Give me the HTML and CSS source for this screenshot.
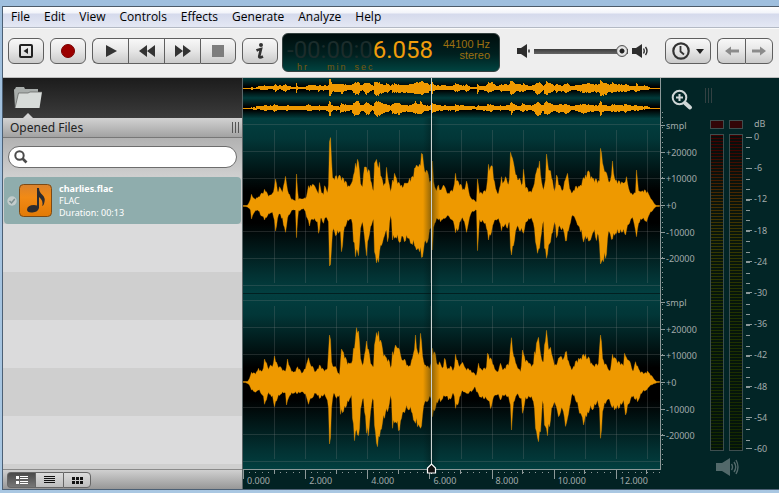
FILE: index.html
```html
<!DOCTYPE html>
<html lang="en">
<head>
    <meta charset="UTF-8">
    <meta name="viewport" content="width=device-width, initial-scale=1.0">
    <title>charlies.flac</title>
    <link rel="stylesheet" href="styles.css">
</head>
<body>
    <div class="window">
        <nav class="menu">
            <button>File</button>
            <button>Edit</button>
            <button>View</button>
            <button>Controls</button>
            <button>Effects</button>
            <button>Generate</button>
            <button>Analyze</button>
            <button>Help</button>
        </nav>

        <header class="toolbar">
            <div class="group">
                <button class="tool" aria-label="Toggle sidebar">
                    <svg width="14" height="14" viewBox="0 0 14 14"><rect x="1" y="1" width="12" height="12" rx="1" fill="none" stroke="#222" stroke-width="2"/><path d="M9 4v6L4.500 7z" fill="#222"/></svg>
                </button>
            </div>
            <div class="group">
                <button class="tool" aria-label="Record">
                    <svg width="14" height="14" viewBox="0 0 14 14"><circle cx="7" cy="7" r="6.500" fill="#9c0000" stroke="#7a0000"/></svg>
                </button>
            </div>
            <div class="group">
                <button class="tool" aria-label="Play">
                    <svg width="12" height="12" viewBox="0 0 12 12"><path d="M1 0l11 6-11 6z" fill="#333"/></svg>
                </button>
                <button class="tool" aria-label="Rewind">
                    <svg width="16" height="12" viewBox="0 0 16 12"><path d="M8 0v12L0 6zM16 0v12L8 6z" fill="#333"/></svg>
                </button>
                <button class="tool" aria-label="Forward">
                    <svg width="16" height="12" viewBox="0 0 16 12"><path d="M0 0v12l8-6zM8 0v12l8-6z" fill="#333"/></svg>
                </button>
                <button class="tool" aria-label="Stop">
                    <svg width="12" height="12" viewBox="0 0 12 12"><path d="M0 0h12v12H0z" fill="#7d7d7d"/></svg>
                </button>
            </div>
            <div class="group">
                <button class="tool" aria-label="Info">
                    <svg width="10" height="17" viewBox="0 0 10 17"><circle cx="6" cy="2" r="2" fill="#333"/><path d="M1.500 7.500q2-1 4.500-1.500L4.200 13.500Q4 15.500 8 13.500" fill="none" stroke="#333" stroke-width="2.600"/></svg>
                </button>
            </div>

            <div class="lcd">
                <div class="time">
                    <div class="digits"><span class="dim">-00:00:0</span><span>6.058</span></div>
                    <div class="units"><span>hr</span><span>min</span><span>sec</span></div>
                </div>
                <div class="format">44100 Hz<br>stereo</div>
            </div>

            <div class="volume">
                <svg width="13" height="14" viewBox="0 0 13 14"><path d="M0 4h4l6-4v14l-6-4H0z" fill="#2d2d2d"/><path d="M12 5.500v3" stroke="#2d2d2d" stroke-width="1.500"/></svg>
                <input type="range" min="0" max="100" value="100" aria-label="Volume">
                <svg width="17" height="14" viewBox="0 0 17 14"><path d="M0 4h4l6-4v14l-6-4H0z" fill="#2d2d2d"/><path d="M11.500 4.500q1.500 2.500 0 5M13.500 3q3 4 0 8" fill="none" stroke="#2d2d2d" stroke-width="1.400"/></svg>
            </div>

            <div class="group right">
                <button class="tool history" aria-label="History">
                    <svg width="18" height="18" viewBox="0 0 18 18"><circle cx="9" cy="9" r="7.700" fill="none" stroke="#333" stroke-width="2.200"/><path d="M8.500 4v5.500l3.500 3" fill="none" stroke="#333" stroke-width="1.800"/></svg>
                    <svg width="8" height="5" viewBox="0 0 8 5"><path d="M0 0h8L4 5z" fill="#222"/></svg>
                </button>
            </div>
            <div class="group">
                <button class="tool arrow" aria-label="Undo">
                    <svg width="14" height="10" viewBox="0 0 14 10"><path d="M0 5l6-4.500v3h8v3H6v3z" fill="#8b8b8b"/></svg>
                </button>
                <button class="tool arrow" aria-label="Redo">
                    <svg width="14" height="10" viewBox="0 0 14 10"><path d="M14 5L8 .5v3H0v3h8v3z" fill="#8b8b8b"/></svg>
                </button>
            </div>
        </header>

        <main>
            <aside class="sidebar">
                <div class="tabs">
                    <button class="tab" aria-label="Opened files">
                        <svg width="30" height="24" viewBox="0 0 30 24"><path d="M2 22L1 4q0-1 1-1l1-2h8l1 2h13v5" fill="#a9aeac"/><path d="M2 22L5.500 7H15l2-1h12l-2.500 16z" fill="#d7dbd9"/><path d="M2 22L5.500 7H15l2-1h12" fill="none" stroke="#5b5e5d" stroke-width=".7"/></svg>
                    </button>
                </div>
                <div class="panel-title">
                    <h2>Opened Files</h2>
                    <span class="grip"></span>
                </div>
                <div class="search">
                    <label>
                        <svg width="14" height="14" viewBox="0 0 14 14"><circle cx="5.500" cy="5.500" r="4.200" fill="none" stroke="#4b4b4b" stroke-width="2"/><path d="M8.500 8.500l4 4" stroke="#4b4b4b" stroke-width="2.600"/></svg>
                        <input type="text" aria-label="Search files">
                    </label>
                </div>
                <ul class="files">
                    <li class="file">
                        <svg class="check" width="10" height="10" viewBox="0 0 10 10"><circle cx="5" cy="5" r="4.700" fill="#c3cccb"/><path d="M2.500 5l2 2 3.300-4" fill="none" stroke="#7c8f8f" stroke-width="1.500"/></svg>
                        <svg class="cover" width="33" height="33" viewBox="0 0 33 33">
                            <defs><linearGradient id="cover" x2="0" y2="1"><stop offset="0" stop-color="#d9822d"/><stop offset=".4" stop-color="#f28a14"/><stop offset="1" stop-color="#e27a06"/></linearGradient></defs>
                            <rect x=".5" y=".5" width="32" height="32" rx="4" fill="url(#cover)" stroke="#7b4a15"/>
                            <path d="M18 4h2q0 4 3.500 7t1.500 9q-.5 1.500-2 2 2-5-3-9v11q-1 4-6.500 4.500Q8 29 8 25.500 8.500 21 15 21l3 .5z" fill="#2c2c30"/>
                        </svg>
                        <div class="file-text">
                            <strong>charlies.flac</strong>
                            <span>FLAC</span>
                            <span>Duration: 00:13</span>
                        </div>
                    </li>
                </ul>
                <div class="views">
                    <button class="view active" aria-label="Details">
                        <svg width="12" height="8" viewBox="0 0 12 8"><path d="M0 0h3v3H0zM0 5h3v3H0zM4 0h8v1H4zM4 2h8v1H4zM4 5h8v1H4zM4 7h8v1H4z" fill="#fff"/></svg>
                    </button>
                    <button class="view" aria-label="List">
                        <svg width="11" height="8" viewBox="0 0 11 8"><path d="M0 0h11v1H0zM0 2h11v1H0zM0 4h11v1H0zM0 6h11v1H0z" fill="#111"/></svg>
                    </button>
                    <button class="view" aria-label="Grid">
                        <svg width="11" height="7" viewBox="0 0 11 7"><path d="M0 0h3v3H0zM4 0h3v3H4zM8 0h3v3H8zM0 4h3v3H0zM4 4h3v3H4zM8 4h3v3H8z" fill="#111"/></svg>
                    </button>
                </div>
            </aside>

            <section class="editor">
                <div class="tracks">
                    <div class="overview">
                        <svg class="mini" data-channel="left" viewBox="0 0 417 20" preserveAspectRatio="none"></svg>
                        <svg class="mini" data-channel="right" viewBox="0 0 417 20" preserveAspectRatio="none"></svg>
                    </div>
                    <svg class="wave" data-channel="left" viewBox="0 0 417 175" preserveAspectRatio="none"></svg>
                    <svg class="wave" data-channel="right" viewBox="0 0 417 175" preserveAspectRatio="none"></svg>
                    <div class="playhead">
                        <svg width="11" height="11" viewBox="0 0 11 11"><path d="M1.500 10V5l4-4 4 4v5z" fill="#111" stroke="#fff" stroke-width="1.200"/></svg>
                    </div>
                </div>
                <div class="ruler">
                    <span>0.000</span><span>2.000</span><span>4.000</span><span>6.000</span><span>8.000</span><span>10.000</span><span>12.000</span>
                </div>
            </section>

            <aside class="levels">
                <div class="scales">
                    <button class="zoom" aria-label="Zoom in">
                        <svg width="22" height="22" viewBox="0 0 22 22"><circle cx="8.500" cy="8.500" r="6.800" fill="none" stroke="#cfd6d6" stroke-width="2"/><path d="M8.500 5v7M5 8.500h7" stroke="#cfd6d6" stroke-width="2"/><path d="M14 14l5 4.500" stroke="#cfd6d6" stroke-width="4" stroke-linecap="round"/></svg>
                    </button>
                    <div class="scale">
                        <span>smpl</span><span>+20000</span><span>+10000</span><span>+0</span><span>-10000</span><span>-20000</span>
                    </div>
                    <div class="scale">
                        <span>smpl</span><span>+20000</span><span>+10000</span><span>+0</span><span>-10000</span><span>-20000</span>
                    </div>
                </div>
                <div class="meters">
                    <span class="grip"></span>
                    <div class="meter-head">
                        <span class="clip"></span>
                        <span class="clip"></span>
                        <span class="unit">dB</span>
                    </div>
                    <div class="meter-body">
                        <span class="bar"></span>
                        <span class="bar"></span>
                        <div class="db">
                            <span>0</span><span>-6</span><span>-12</span><span>-18</span><span>-24</span><span>-30</span><span>-36</span><span>-42</span><span>-48</span><span>-54</span><span>-60</span>
                        </div>
                    </div>
                    <svg class="speaker" width="23" height="18" viewBox="0 0 23 18"><path d="M0 5h6l8-5v18l-8-5H0z" fill="#52696a"/><path d="M15.500 6q2 3 0 6M18 4q3.500 5 0 10M20 2q4 7 0 14" fill="none" stroke="#52696a" stroke-width="1.400"/></svg>
                </div>
            </aside>
        </main>
    </div>
    <script src="script.js"></script>
</body>
</html>
```
FILE: styles.css
```css
* {
    box-sizing: border-box;
}

body {
    margin: 0;
    min-height: 100vh;
    padding: 6px 0 4px 2px;
    display: flex;
    background: linear-gradient(#9fbfde, #a9c7e2);
    font-family: "Noto Sans", "Open Sans", sans-serif;
    font-size: 9px;
    color: #222;
}

button {
    margin: 0;
    padding: 0;
    border: 0;
    background: none;
    font: inherit;
    color: inherit;
}

svg {
    display: block;
    flex: none;
}

.window {
    flex: 1;
    min-width: 0;
    display: flex;
    flex-direction: column;
    border-top: 1px solid #4c5a68;
    border-left: 1px solid #4c6075;
    border-bottom: 1px solid #4c6075;
    background: #efefef;
}

/* menu */
.menu {
    height: 21px;
    display: flex;
    gap: 14px;
    padding: 0 8px;
    background: linear-gradient(#fff 0, #f2f4fa 6px, #d5daec 7px, #e4e8f4);
    border-bottom: 1px solid #b3b9c4;
    font-family: "Open Sans", sans-serif;
    font-size: 12px;
    line-height: 20px;
    color: #000;
}

/* toolbar */
.toolbar {
    height: 50px;
    display: flex;
    align-items: flex-start;
    gap: 6px;
    padding: 9px 6px 0 5px;
    background: #eeeeee;
    border-top: 1px solid #fafafa;
    border-bottom: 1px solid #bdbdbd;
}

.group {
    display: flex;
}

.right {
    margin-left: auto;
}

.tool {
    width: 36px;
    height: 26px;
    display: flex;
    align-items: center;
    justify-content: center;
    border: 1px solid #5f5f5f;
    border-right-width: 0;
    background: linear-gradient(#f8f8f8, #e6e6e6 50%, #cacaca);
}

.tool:first-child {
    border-radius: 6px 0 0 6px;
}

.tool:last-child {
    border-right-width: 1px;
    border-radius: 0 6px 6px 0;
}

.tool:only-child {
    border-radius: 6px;
}

.history {
    width: 46px;
    gap: 6px;
}

.arrow {
    width: 28px;
}

.lcd {
    width: 218px;
    height: 39px;
    margin: -5px 0 0 -2px;
    padding: 5px 9px 0 4px;
    display: flex;
    justify-content: space-between;
    border-radius: 6px;
    border: 1px solid #33403f;
    background: linear-gradient(#000d0d, #00201f 55%, #004340);
    font-family: Roboto, sans-serif;
}

.digits {
    height: 23px;
    font-size: 24px;
    line-height: 23px;
    color: #f09c0c;
    white-space: nowrap;
}

.dim {
    color: #1b2c2b;
}

.units {
    display: flex;
    gap: 18px;
    padding-left: 10px;
    font-family: "Liberation Sans", sans-serif;
    font-size: 9px;
    line-height: 10px;
    letter-spacing: 2px;
    color: #7a5a10;
}

.units span:last-child {
    margin-left: -11px;
}

.format {
    font-family: "Liberation Sans", sans-serif;
    font-size: 11px;
    line-height: 11px;
    text-align: right;
    white-space: nowrap;
    color: #9c7010;
}

.volume {
    height: 26px;
    display: flex;
    align-items: center;
    gap: 4px;
    margin-left: 11px;
}

.volume input {
    -webkit-appearance: none;
    appearance: none;
    width: 94px;
    height: 12px;
    margin: 0;
    background: linear-gradient(#3b3b3b, #666) center / 100% 5px no-repeat;
    border-radius: 3px;
}

.volume input::-webkit-slider-thumb {
    -webkit-appearance: none;
    width: 12px;
    height: 12px;
    border: 1px solid #555;
    border-radius: 50%;
    background: radial-gradient(circle, #222 0, #222 2px, #f0f0f0 3px, #bbb 6px);
}

/* main area */
main {
    flex: 1;
    display: flex;
    min-height: 0;
}

.grip {
    width: 7px;
    border-left: 1px solid #555;
    border-right: 1px solid #555;
    background: linear-gradient(#555, #555) center / 1px 100% no-repeat;
}

.sidebar {
    width: 240px;
    flex: none;
    display: flex;
    flex-direction: column;
    border-right: 1px solid #5c6668;
    background: #cfcfcf;
}

.tabs {
    height: 40px;
    background: linear-gradient(#1c1c1c, #3b3b3b);
}

.tab {
    width: 50px;
    height: 40px;
    display: flex;
    flex-direction: column;
    align-items: center;
    justify-content: space-between;
    padding-top: 8px;
}

.tab::after {
    content: "";
    border: 5px solid transparent;
    border-top: 0;
    border-bottom-color: #d4d4d4;
}

.panel-title {
    height: 20px;
    display: flex;
    justify-content: space-between;
    padding: 4px 3px 4px 7px;
    background: linear-gradient(#d2d2d2, #a2a2a2);
    border-bottom: 1px solid #777;
}

.panel-title h2 {
    margin: 0;
    font-size: 12px;
    font-weight: normal;
    line-height: 11px;
}

.search {
    height: 38px;
    padding: 8px 5px;
    background: linear-gradient(#b2b2b2, #cfcfcf);
}

.search label {
    height: 22px;
    display: flex;
    align-items: center;
    gap: 6px;
    padding: 0 10px 0 5px;
    border: 1px solid #6d6d6d;
    border-radius: 11px;
    background: #fff;
}

.search input {
    flex: 1;
    min-width: 0;
    border: 0;
    outline: 0;
    background: none;
    font: inherit;
    font-size: 12px;
}

.files {
    flex: 1;
    margin: 0;
    padding: 0 1px;
    list-style: none;
    background: repeating-linear-gradient(#cfcfcf 0, #cfcfcf 48px, #dbdbdc 48px, #dbdbdc 96px);
}

.file {
    height: 47px;
    margin-top: 1px;
    display: flex;
    align-items: center;
    padding-left: 3px;
    border-radius: 4px;
    background: #8fadad;
    color: #fff;
}

.cover {
    margin: 0 7px 0 2px;
}

.file-text {
    display: flex;
    flex-direction: column;
    line-height: 12px;
}

.views {
    height: 20px;
    display: flex;
    padding: 2px 4px;
    border-top: 1px solid #8a8a8a;
    background: linear-gradient(#d0d0d0, #979797);
}

.view {
    width: 28px;
    height: 16px;
    display: flex;
    align-items: center;
    justify-content: center;
    border: 1px solid #666;
    border-right-width: 0;
    background: linear-gradient(#dcdcdc, #bdbdbd);
}

.view:first-child {
    border-radius: 4px 0 0 4px;
}

.view:last-child {
    border-right-width: 1px;
    border-radius: 0 4px 4px 0;
}

.active {
    background: linear-gradient(#4a4a4a, #777);
}

/* waveform editor */
.editor {
    flex: 1;
    min-width: 0;
    display: flex;
    flex-direction: column;
    background: #022223;
}

.tracks {
    flex: 1;
    min-height: 0;
    position: relative;
    display: flex;
    flex-direction: column;
}

.overview {
    height: 40px;
}

.mini {
    width: 100%;
    height: 20px;
    background: linear-gradient(#003b3b, #000 45%, #000 60%, #003b3b);
}

.wave {
    width: 100%;
    height: 0;
    flex: 1;
    background: linear-gradient(#023f40, #023637 12%, #000 42%, #000 60%, #023233 90%, #023f40);
}

.wave + .wave {
    border-top: 1px solid #012021;
}

.wave path,
.mini path {
    fill: #ee9900;
}

.mini path {
    shape-rendering: crispEdges;
}

.wave .edge {
    stroke: #ee9900;
    stroke-opacity: .35;
}

.wave .grid {
    fill: none;
    stroke: #8a8a8a;
    stroke-opacity: .23;
}

.playhead {
    position: absolute;
    top: 0;
    bottom: -5px;
    left: 45%;
    width: 17px;
    margin-left: -8px;
    display: flex;
    align-items: flex-end;
    justify-content: center;
    background:
        linear-gradient(#ccd4d2, #ccd4d2) 8px 0 / 1px 100% no-repeat,
        linear-gradient(90deg, rgba(0, 20, 20, 0), rgba(0, 20, 20, .4) 50%, rgba(0, 20, 20, 0)) 0 40px / 100% calc(100% - 46px) no-repeat;
}

.ruler {
    height: 20px;
    display: flex;
    overflow: hidden;
    border-top: 1px solid #8d9999;
    line-height: 22px;
    color: #a1aaaa;
}

.ruler span {
    flex: 0 0 14.9%;
    padding-left: 4px;
    background:
        linear-gradient(#8d9999, #8d9999) 0 0 / 1px 9px no-repeat,
        linear-gradient(#8d9999, #8d9999) 50% 0 / 1px 4px no-repeat,
        repeating-linear-gradient(90deg, #8d9999 0, #8d9999 1px, transparent 1px, transparent 10%) 0 2px / 100% 1px no-repeat;
}

/* right side scales */
.levels {
    width: 119px;
    flex: none;
    display: flex;
    background: #022526;
    color: #a1aaaa;
}

.scales {
    width: 44px;
    display: flex;
    flex-direction: column;
    margin-bottom: 19px;
    padding-bottom: 4px;
    border-left: 1px solid #8d9999;
}

.zoom {
    height: 34px;
    padding: 9px 0 0 10px;
}

.scale {
    flex: 1;
    display: flex;
    flex-direction: column;
    padding-bottom: 17px;
    background: repeating-linear-gradient(#8d9999 0, #8d9999 1px, transparent 1px, transparent 5px) 1px 0 / 1px 100% no-repeat;
}

.scale span {
    flex: 1;
    display: flex;
    align-items: center;
    gap: 1px;
}

.scale span::before {
    content: "";
    width: 4px;
    height: 1px;
    background: #8d9999;
}

.meters {
    flex: 1;
    display: flex;
    flex-direction: column;
    padding-top: 10px;
}

.meters .grip {
    height: 15px;
    margin-left: 1px;
    opacity: .6;
}

.meter-head,
.meter-body {
    display: flex;
    gap: 5px;
    padding-left: 6px;
}

.meter-head {
    height: 9px;
    margin: 17px 0 5px;
}

.clip {
    width: 14px;
    border: 1px solid #3d4e4e;
    background: #330507;
}

.unit {
    margin-left: 6px;
    line-height: 8px;
}

.meter-body {
    flex: 1;
}

.bar {
    width: 14px;
    border: 1px solid #3d4e4e;
    background:
        repeating-linear-gradient(transparent 0, transparent 1px, rgba(1, 16, 14, .85) 1px, rgba(1, 16, 14, .85) 3px),
        linear-gradient(#420000, #3f0600 6%, #482c00 20%, #3a3800 32%, #213300 55%, #142800);
}

.bar + .bar {
    margin-right: -2px;
}

.db {
    flex: 1;
    display: flex;
    flex-direction: column;
    justify-content: space-between;
    margin: -3px 0 -4px;
    line-height: 12px;
    background: repeating-linear-gradient(#8d9999 0, #8d9999 1px, transparent 1px, transparent calc(100% / 30)) 0 6px / 4px calc(100% - 11px) no-repeat;
}

.db span {
    display: flex;
    align-items: center;
    gap: 2px;
}

.db span::before {
    content: "";
    width: 6px;
    height: 1px;
    background: #8d9999;
}

.speaker {
    margin: 7px 0 13px 12px;
}
```
FILE: script.js
```js
// Peak envelopes as x,y pairs, three units per pixel. Each channel is kept in
// two halves, x0 shifts a half to the start of the track.
const channels = {
    left: {
        mid: 393,
        up: [
            [-9, '10,393 20,392 28,380 34,358 40,372 50,368 60,360 73,343 82,360 90,360 98,355 103,335 106,312 111,350 115,350 119,335 125,350 132,325 137,304 141,345 150,368 160,375 167,378 169,297 172,370 185,372 198,365 205,332 212,330 222,332 230,345 233,360 237,323 241,345 249,360 254,332 262,355 266,330 269,200 271,195 275,290 280,310 288,305 298,300 308,310 316,320 325,332 335,325 342,290 347,265 352,253 358,300 362,330 367,335 370,300 374,276 380,280 388,290 395,335 400,350 404,265 408,260 417,262 421,305 428,325 436,325 440,277 444,320 451,350 457,315 464,295 470,315 476,328 485,330 500,325 508,310 516,305 524,280 530,270 537,268 544,235 550,265 558,285 566,310 573,320 577,258 580,330 586,345 594,330 600,345 609,330 616,345 625,355'],
            [621, '0,350 10,340 15,295 22,320 32,330 42,345 49,318 55,355 65,372 78,380 82,312 86,350 95,355 108,340 115,268 120,280 126,275 132,320 140,360 148,340 153,305 160,325 166,305 171,325 177,310 181,232 186,250 192,285 200,300 210,320 217,325 220,283 224,330 238,352 250,335 256,300 262,280 268,258 273,320 278,350 284,330 289,237 294,285 302,290 310,345 316,335 320,300 326,330 334,345 344,320 352,295 356,335 365,355 375,335 390,330 405,300 412,290 425,305 440,315 448,320 452,220 457,265 463,290 472,305 482,315 487,258 492,310 505,318 520,325 530,305 535,350 545,355 555,355 559,285 563,345 572,350 582,345 592,350 600,370 610,383 617,392 632,393']
        ],
        down: [
            [-9, '10,393 20,395 30,405 34,432 40,412 52,405 62,420 72,435 82,420 95,412 102,435 106,468 111,430 118,415 125,430 131,450 137,472 142,425 155,405 167,405 169,488 172,410 190,400 200,425 207,453 215,430 228,440 232,440 236,475 240,430 250,445 256,425 264,440 269,573 273,520 277,470 285,478 295,475 302,470 305,530 308,475 318,445 330,432 336,445 340,500 347,545 354,535 360,460 366,440 372,485 378,540 384,490 392,455 400,430 404,530 409,562 416,562 421,510 430,490 438,465 443,500 448,430 452,420 457,495 470,490 480,500 492,495 505,490 512,505 522,510 530,525 538,530 544,545 550,525 558,505 566,480 572,450 576,525 580,450 590,430 600,440 610,430 620,425'],
            [621, '0,430 8,435 15,473 23,465 32,430 42,440 48,472 55,435 65,410 78,405 82,527 86,440 100,440 108,460 116,495 122,470 130,445 140,430 148,440 153,467 162,450 172,460 178,440 181,520 185,540 190,500 198,460 210,465 219,475 228,440 240,430 250,445 256,500 263,535 269,520 274,470 278,420 284,520 290,550 295,510 302,495 308,460 313,440 320,488 327,450 335,465 347,498 356,460 366,420 372,425 382,450 392,470 400,500 410,492 420,495 430,470 438,495 444,480 448,510 452,567 459,560 467,540 473,480 485,490 500,475 515,470 525,480 532,450 545,430 553,450 558,485 563,450 575,430 588,440 598,415 610,402 617,394 632,393']
        ]
    },
    right: {
        mid: 291,
        up: [
            [-9, '10,291 22,290 34,262 44,265 55,250 64,262 74,222 82,250 92,240 97,245 103,213 110,240 120,245 134,262 141,222 148,250 160,262 172,245 185,265 198,240 206,218 212,240 225,260 237,240 250,255 262,250 266,200 269,150 273,230 284,245 297,270 300,230 303,192 311,208 320,230 335,235 341,190 345,160 350,128 355,150 360,220 367,242 373,210 379,168 386,205 392,235 399,245 403,180 408,150 414,139 420,165 427,200 437,215 445,225 452,250 458,200 465,180 473,190 482,210 495,230 505,245 516,220 521,205 526,150 531,200 536,210 541,145 546,215 555,240 565,248 572,240 577,190 584,205 592,245 598,230 606,250 613,220 619,245 625,250'],
            [621, '0,245 10,255 17,208 24,240 30,240 37,232 45,250 60,255 70,265 78,270 84,235 92,255 108,245 113,205 122,225 130,240 140,265 150,235 158,255 170,240 178,225 181,185 184,158 189,215 200,240 210,262 217,195 224,220 235,235 248,240 254,200 260,175 266,157 272,210 278,245 283,180 289,136 294,195 302,187 307,225 317,240 326,220 335,215 348,202 356,235 365,255 375,230 385,220 405,208 415,220 428,240 445,235 449,190 452,150 456,220 466,240 480,255 487,208 495,220 505,230 518,240 524,205 531,225 541,235 548,258 556,230 568,258 582,265 592,258 605,275 616,288 622,291 632,291']
        ],
        down: [
            [-9, '10,291 24,297 34,315 45,322 55,315 66,330 74,358 82,325 95,335 103,365 110,340 125,325 134,320 140,360 147,330 160,325 172,325 185,320 198,335 206,358 213,340 225,325 237,340 250,330 260,340 264,370 269,477 273,370 280,325 290,340 299,330 302,388 308,380 316,365 325,350 334,330 338,400 344,467 351,450 356,440 361,370 368,335 374,380 379,445 384,450 390,380 398,330 403,420 408,465 413,485 419,455 425,410 433,400 438,370 442,380 452,325 457,430 465,410 475,435 485,400 495,370 505,375 515,380 521,405 526,415 533,425 542,430 547,375 558,350 572,335 577,395 584,370 594,345 602,350 613,330 625,345'],
            [621, '0,340 10,325 17,370 25,350 33,320 50,325 65,320 72,305 80,320 88,335 100,340 113,345 120,368 128,345 140,325 150,345 160,330 172,335 180,360 184,435 189,350 200,330 212,340 218,385 224,345 238,335 250,350 257,430 262,455 266,470 271,440 277,325 283,420 291,452 298,420 304,370 312,350 325,395 332,370 345,418 352,400 358,365 366,325 376,345 388,385 395,390 401,420 408,395 418,370 428,375 440,350 448,370 452,460 456,380 468,345 480,355 492,375 505,370 518,350 527,390 534,355 548,335 563,350 575,320 588,315 600,300 615,295 622,291 632,291']
        ]
    }
};

const WIDTH = 417;

function envelope(halves, mid) {
    const points = [];
    halves.forEach(([x0, text]) => {
        text.split(' ').forEach(pair => {
            const [x, y] = pair.split(',').map(Number);
            points.push([(x + x0) / 3, Math.abs(y - mid) / 3]);
        });
    });
    const result = [];
    let i = 0;
    for (let x = 0; x < WIDTH; x++) {
        while (i < points.length - 2 && points[i + 1][0] < x) i++;
        const [ax, ay] = points[i];
        const [bx, by] = points[i + 1];
        const t = Math.min(1, Math.max(0, (x - ax) / (bx - ax || 1)));
        // small ripple between the peaks
        const ripple = 1.05 - ((x * x * 31 + x * 17) % 23) / 110;
        const value = (ay + (by - ay) * t) * ripple;
        // a peak that falls inside this column is kept whole
        const peaks = points.filter(p => Math.floor(p[0]) === x).map(p => p[1]);
        result.push(Math.max(value, ...peaks));
    }
    return result;
}

function outline(up, down, mid) {
    let d = `M0 ${mid}`;
    up.forEach((v, x) => { d += `L${x + 0.5} ${(mid - Math.max(0.5, v)).toFixed(1)}`; });
    for (let x = WIDTH - 1; x >= 0; x--) {
        d += `L${x + 0.5} ${(mid + Math.max(0.5, down[x])).toFixed(1)}`;
    }
    return d + 'z';
}

// one whole-pixel bar for each column
function bars(up, down) {
    let d = '';
    up.forEach((v, x) => {
        const top = Math.max(0, Math.round(v * 0.13 - 0.6));
        const bottom = Math.max(0, Math.round(down[x] * 0.13 - 0.6));
        const body = x > 12 && x < 405 ? 1 : 0;
        d += `M${x} ${10 - top - body}h1v${top + bottom + 1 + body}h-1z`;
    });
    return d;
}

function grid() {
    let d = '';
    [6, 33, 60, 87, 113, 140, 167].forEach(y => { d += `M0 ${y + 0.5}H${WIDTH}`; });
    for (let n = 1; n < 14; n++) d += `M${Math.round(n * 31.1) + 0.5} 12V165`;
    return d;
}

document.querySelectorAll('.wave, .mini').forEach(svg => {
    const channel = channels[svg.dataset.channel];
    const up = envelope(channel.up, channel.mid);
    const down = envelope(channel.down, channel.mid);
    if (svg.classList.contains('mini')) {
        svg.innerHTML = `<path d="${bars(up, down)}"/>`;
    } else {
        svg.innerHTML = `<path class="grid" d="${grid()}"/><path class="edge" d="${outline(up, down, 88)}"/>`;
    }
});
```
